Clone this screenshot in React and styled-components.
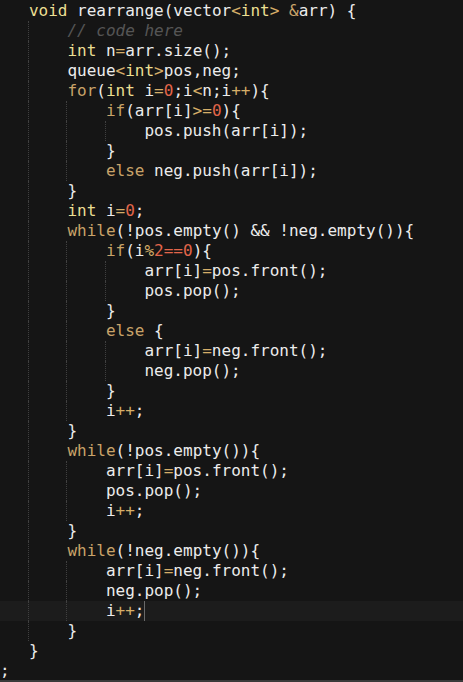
import * as React from 'react';
import styled, { createGlobalStyle } from 'styled-components';

// --- THEME

const Colors = {
	bg: '#151515',
	text: '#ececec',
	kw: '#ebdf92',
	ctl: '#c9a369',
	op: '#d6ae68',
	num: '#e2654a',
	cm: '#555555',
	guide: '#404040',
	lineHighlight: '#1c1c1c',
	cursor: '#6a6a6a',
};

const CHAR = 9.63;

const GlobalStyle = createGlobalStyle`
	html, body {
		margin: 0;
		padding: 0;
		background: ${Colors.bg};
	}
`;

// --- COMPONENTS

const Editor = styled.div`
	box-sizing: border-box;
	width: 463px;
	height: 682px;
	overflow: hidden;
	padding-top: 1px;
	background: ${Colors.bg};
	border-bottom: 2px solid #3a3a3a;
	font-family: "DejaVu Sans Mono", "Liberation Mono", monospace;
	font-size: 16px;
	line-height: 20px;
	color: ${Colors.text};
	white-space: pre;
`;

const Line = styled.div`
	display: flex;
	height: 20px;
	background: ${p => (p.$active ? Colors.lineHighlight : 'transparent')};
`;

const Lead = styled.span`
	display: inline-block;
	width: ${p => p.$cols * CHAR}px;
	flex: none;
`;

const Guide = styled.span`
	display: inline-block;
	flex: none;
	box-sizing: border-box;
	width: ${4 * CHAR}px;
	height: 20px;
	margin-left: -1px;
	margin-right: 1px;
	border-left: 1px dotted ${Colors.guide};
`;

const Token = styled.span`
	color: ${p => Colors[p.$kind] || Colors.text};
	font-style: ${p => (p.$kind === 'cm' ? 'italic' : 'normal')};
`;

const Cursor = styled.span`
	display: inline-block;
	width: 1px;
	height: 20px;
	background: ${Colors.cursor};
`;

// --- DATA

// each line: [lead columns, guide count, tokens, active]
// token: string (plain) or [kind, text]
const code = [
	[3, 0, [['kw', 'void'], ' rearrange(vector', ['op', '<'], ['kw', 'int'], ['op', '>'], ' ', ['ctl', '&'], 'arr) {']],
	[3, 1, [['cm', '// code here']]],
	[3, 1, [['kw', 'int'], ' n', ['op', '='], 'arr.size();']],
	[3, 1, ['queue', ['op', '<'], ['kw', 'int'], ['op', '>'], 'pos,neg;']],
	[3, 1, [['ctl', 'for'], '(', ['kw', 'int'], ' i', ['op', '='], ['num', '0'], ';i', ['op', '<'], 'n;i', ['op', '++'], '){']],
	[3, 2, [['ctl', 'if'], '(arr[i]', ['op', '>='], ['num', '0'], '){']],
	[3, 3, ['pos.push(arr[i]);']],
	[3, 2, ['}']],
	[3, 2, [['ctl', 'else'], ' neg.push(arr[i]);']],
	[3, 1, ['}']],
	[3, 1, [['kw', 'int'], ' i', ['op', '='], ['num', '0'], ';']],
	[3, 1, [['ctl', 'while'], '(!pos.empty() && !neg.empty()){']],
	[3, 2, [['ctl', 'if'], '(i', ['op', '%'], ['num', '2=='], ['num', '0'], '){']],
	[3, 3, ['arr[i]', ['op', '='], 'pos.front();']],
	[3, 3, ['pos.pop();']],
	[3, 2, ['}']],
	[3, 2, [['ctl', 'else'], ' {']],
	[3, 3, ['arr[i]', ['op', '='], 'neg.front();']],
	[3, 3, ['neg.pop();']],
	[3, 2, ['}']],
	[3, 2, ['i', ['op', '++'], ';']],
	[3, 1, ['}']],
	[3, 1, [['ctl', 'while'], '(!pos.empty()){']],
	[3, 2, ['arr[i]', ['op', '='], 'pos.front();']],
	[3, 2, ['pos.pop();']],
	[3, 2, ['i', ['op', '++'], ';']],
	[3, 1, ['}']],
	[3, 1, [['ctl', 'while'], '(!neg.empty()){']],
	[3, 2, ['arr[i]', ['op', '='], 'neg.front();']],
	[3, 2, ['neg.pop();']],
	[3, 2, ['i', ['op', '++'], ';'], true],
	[3, 1, ['}']],
	[3, 0, ['}']],
	[0, 0, [';']],
];

// --- APP

export default function App() {
	return (
		<>
			<GlobalStyle />
			<Editor>
				{code.map(([lead, guides, tokens, active], i) => (
					<Line key={i} $active={active}>
						<Lead $cols={lead} />
						{Array.from({ length: guides }).map((_, g) => (
							<Guide key={g} />
						))}
						{tokens.map((t, j) =>
							typeof t === 'string'
								? <Token key={j}>{t}</Token>
								: <Token key={j} $kind={t[0]}>{t[1]}</Token>
						)}
						{active && <Cursor />}
					</Line>
				))}
			</Editor>
		</>
	);
}
